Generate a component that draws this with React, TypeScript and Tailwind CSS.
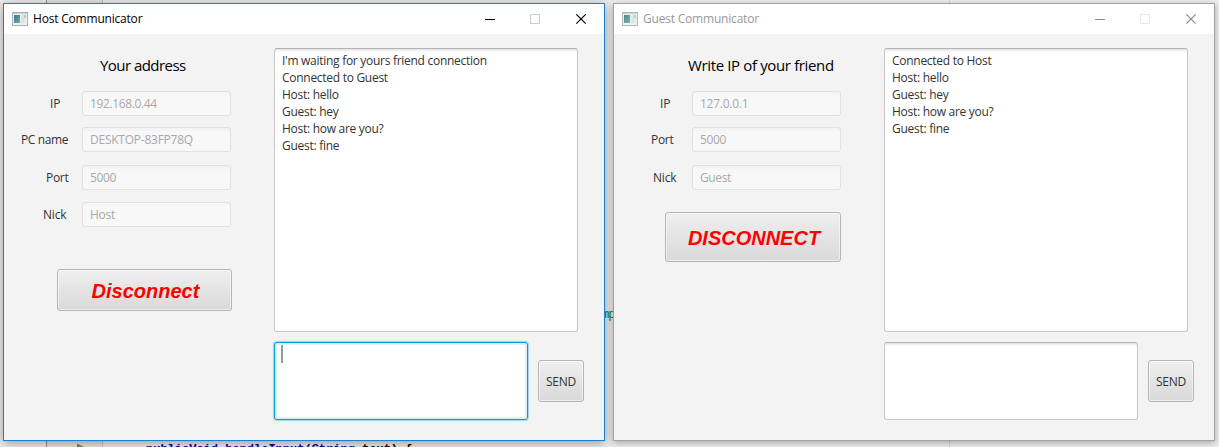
import React from "react";

type Row = { label: string; value: string; labelBox: string; gap: string; tracking: string };

type WindowProps = {
  title: string;
  active: boolean;
  heading: string;
  headingBox: string;
  rows: Row[];
  action: string;
  actionBox: string;
  messages: string[];
};

const AppIcon = ({ active }: { active: boolean }) => (
  <svg width="16" height="14" viewBox="0 0 16 14" shapeRendering="crispEdges" className={active ? "shrink-0" : "shrink-0 opacity-90"}>
    <defs>
      <linearGradient id="pane" x1="0" y1="0" x2="1" y2="1">
        <stop offset="0" stopColor="#3b78a0" />
        <stop offset="1" stopColor="#62b487" />
      </linearGradient>
    </defs>
    <rect x="0.5" y="0.5" width="15" height="13" fill="#eef0f1" stroke="#a9afb3" />
    <rect x="1" y="1" width="14" height="1" fill="#c9ced2" />
    <rect x="2" y="3" width="6" height="8" fill="url(#pane)" />
    <rect x="9" y="3" width="3" height="8" fill="#dcdedf" />
    <rect x="12" y="3" width="2" height="3" fill="#a5cfc2" />
    <rect x="12" y="6" width="2" height="5" fill="#e6e8e9" />
  </svg>
);

const WindowControls = ({ active }: { active: boolean }) => {
  const ink = active ? "#000000" : "#8c8c8c";
  return (
    <svg width="102" height="11" viewBox="0 0 102 11" className="shrink-0">
      <path d="M0 5.5H10" stroke={ink} />
      <rect x="45.5" y="0.5" width="9" height="9" fill="none" stroke={active ? "#cccccc" : "#e8e8e8"} />
      <path d="M91.3 0.3L100.7 9.7M100.7 0.3L91.3 9.7" stroke={ink} strokeWidth="1.1" />
    </svg>
  );
};

const Field = ({ row }: { row: Row }) => (
  <div className={`flex h-[25px] items-center ${row.gap}`}>
    <span className={`shrink-0 whitespace-nowrap text-[12px] text-[#333333] ${row.labelBox}`}>{row.label}</span>
    <div
      className={`flex h-[25px] w-[149px] shrink-0 items-center rounded-[3px] border border-[#e1e1e1] bg-gradient-to-b from-[#f3f3f3] to-[#f8f8f8] to-20% pl-[7px] text-[12px] text-[#a8a8a8] ${row.tracking}`}
    >
      {row.value}
    </div>
  </div>
);

const buttonSkin =
  "flex shrink-0 items-center justify-center whitespace-nowrap rounded-[3px] border border-[#b5b5b5] bg-gradient-to-b from-[#efefef] to-[#d9d9d9] shadow-[inset_0_0_0_1px_rgba(255,255,255,0.55)]";

const areaSkin =
  "shrink-0 rounded-[3px] border border-[#c8c8c8] border-t-[#b4b4b4] bg-white shadow-[inset_0_3px_3px_-2px_rgba(0,0,0,0.16)]";

const CommunicatorWindow = (w: WindowProps) => (
  <section
    className={`flex h-[438px] w-[602px] shrink-0 flex-col border bg-[#f3f3f3] ${
      w.active
        ? "border-[#1b80d2] shadow-[0_2px_10px_rgba(0,0,0,0.38)]"
        : "border-[#a3a3a3] shadow-[0_2px_7px_rgba(0,0,0,0.3)]"
    }`}
  >
    <header className="flex h-[30px] shrink-0 items-center bg-white pl-2 pr-[17px]">
      <AppIcon active={w.active} />
      <h1 className={`ml-[5px] grow whitespace-nowrap text-[12px] tracking-[-0.2px] ${w.active ? "text-black" : "text-[#999999]"}`}>
        {w.title}
      </h1>
      <WindowControls active={w.active} />
    </header>
    <div className="flex pt-[14px]">
      <div className="w-[270px] shrink-0 pt-[5px]">
        <h2 className={`h-[24px] whitespace-nowrap text-[15px] leading-[24px] text-black ${w.headingBox}`}>{w.heading}</h2>
        {w.rows.map((row) => (
          <Field key={row.label} row={row} />
        ))}
        <button className={`${buttonSkin} ${w.actionBox} pl-[2px] pt-[2px] font-['Liberation_Sans',sans-serif] font-bold italic text-[#ff0000]`}>
          {w.action}
        </button>
      </div>
      <div className="flex flex-col gap-[10px]">
        <div className={`${areaSkin} h-[284px] w-[304px] pl-[7px] pt-[3px] text-[12px] leading-[17px] tracking-[-0.28px] text-[#333333]`}>
          {w.messages.map((m) => (
            <p key={m} className="whitespace-nowrap">{m}</p>
          ))}
        </div>
        <div className="flex gap-[10px]">
          {w.active ? (
            <div className="h-[78px] w-[254px] shrink-0 rounded-[3px] border border-[#039ed3] bg-white pl-[6px] pt-[2px] shadow-[0_0_1px_1px_rgba(3,158,211,0.35),inset_0_0_0_2px_#dcf0f6]">
              <div className="h-[18px] w-[2px] bg-[#999999]" />
            </div>
          ) : (
            <div className={`${areaSkin} h-[78px] w-[254px]`} />
          )}
          <button className={`${buttonSkin} mt-[18px] h-[42px] w-[46px] pt-[2px] text-[12px] tracking-[-0.3px] text-[#333333]`}>SEND</button>
        </div>
      </div>
    </div>
  </section>
);

const hostRows: Row[] = [
  { label: "IP", value: "192.168.0.44", labelBox: "w-[78px] pl-[46px]", gap: "mt-[14px]", tracking: "tracking-[-0.37px]" },
  { label: "PC name", value: "DESKTOP-83FP78Q", labelBox: "w-[78px] pl-[17px] tracking-[-0.4px]", gap: "mt-[11px]", tracking: "tracking-[-0.24px]" },
  { label: "Port", value: "5000", labelBox: "w-[78px] pl-[42px] tracking-[-0.3px]", gap: "mt-[13px]", tracking: "tracking-[-0.37px]" },
  { label: "Nick", value: "Host", labelBox: "w-[78px] pl-[39px] tracking-[-0.2px]", gap: "mt-[12px]", tracking: "tracking-[-0.3px]" },
];

const guestRows: Row[] = [
  { label: "IP", value: "127.0.0.1", labelBox: "w-[78px] pl-[46px]", gap: "mt-[14px]", tracking: "tracking-[-0.25px]" },
  { label: "Port", value: "5000", labelBox: "w-[78px] pl-[37px] tracking-[-0.3px]", gap: "mt-[11px]", tracking: "tracking-[-0.37px]" },
  { label: "Nick", value: "Guest", labelBox: "w-[78px] pl-[39px] tracking-[-0.2px]", gap: "mt-[13px]", tracking: "tracking-[-0.37px]" },
];

const chat = ["Host: hello", "Guest: hey", "Host: how are you?", "Guest: fine"];

export default function App() {
  return (
    <main className="relative h-[447px] w-[1219px] overflow-hidden bg-[#eeeeee] font-['Open_Sans','Noto_Sans',sans-serif]">
      <div className="absolute inset-0 flex">
        <div className="w-[47px] shrink-0 border-r border-[#8f8f8f]" />
        <div className="w-[56px] shrink-0 border-r border-[#c4c4c4] bg-[#e6e6e6]" />
        <div className="w-[847px] shrink-0 border-r border-[#d0d0d0]" />
      </div>
      <svg className="absolute left-[77px] top-[443px]" width="12" height="4" viewBox="0 0 12 4">
        <path d="M0 0.5L7 4H0Z" fill="#5f9468" />
      </svg>
      <pre className="absolute left-[146px] top-[444px] font-['Liberation_Mono',monospace] text-[12px] font-bold leading-[13px] text-[#000080]">
        {"publicVoid handleInput(String"} <span className="text-black">text) {"{"}</span>
      </pre>
      <span className="absolute left-[602px] top-[308px] font-['Liberation_Mono',monospace] text-[12px] leading-[14px] tracking-[-1px] text-[#0f7a1f]">mp</span>
      <div className="relative flex gap-2 pl-[3px] pt-[3px]">
        <CommunicatorWindow
          title="Host Communicator"
          active
          heading="Your address"
          headingBox="pl-[96px] tracking-[-0.55px]"
          rows={hostRows}
          action="Disconnect"
          actionBox="ml-[53px] mt-[42px] h-[42px] w-[175px] text-[20px]"
          messages={["I'm waiting for yours friend connection", "Connected to Guest", ...chat]}
        />
        <CommunicatorWindow
          title="Guest Communicator"
          active={false}
          heading="Write IP of your friend"
          headingBox="pl-[74px] tracking-[-0.36px]"
          rows={guestRows}
          action="DISCONNECT"
          actionBox="ml-[51px] mt-[22px] h-[50px] w-[176px] text-[20px]"
          messages={["Connected to Host", ...chat]}
        />
      </div>
    </main>
  );
}
